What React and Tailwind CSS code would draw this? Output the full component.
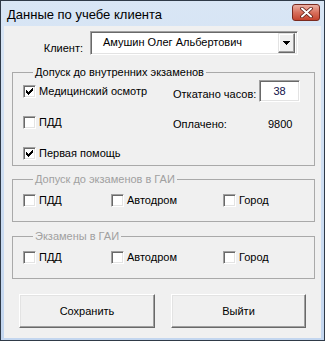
import React from 'react'

const FONT = { fontFamily: '"Liberation Sans", Arial, sans-serif' }

function Check({ checked, label }) {
  return (
    <div className="flex items-center gap-[3px] h-[20px]">
      <span className="w-[13px] h-[13px] shrink-0 bg-white border border-t-[#a0a0a0] border-l-[#a0a0a0] border-r-white border-b-white shadow-[inset_1px_1px_0_#696969,inset_-1px_-1px_0_#e3e3e3] flex items-center justify-center">
        {checked && (
          <svg width="7" height="7" viewBox="0 0 7 7" shapeRendering="crispEdges">
            <polygon points="0,2 2,4 7,-1 7,2 2,7 0,5" fill="#000" />
          </svg>
        )}
      </span>
      <span className="leading-[13px]">{label}</span>
    </div>
  )
}

function Group({ title, muted, children, className = '' }) {
  return (
    <fieldset className={`ml-[8px] w-[303px] border border-[#a9a9a9] pl-[10px] ${className}`}>
      <legend className={`ml-[10px] px-[2px] leading-[13px] ${muted ? 'text-[#a0a0a0]' : 'text-black'}`}>
        {title}
      </legend>
      {children}
    </fieldset>
  )
}

function Row3({ items }) {
  return (
    <div className="grid grid-cols-[88px_112px_1fr] mt-[4px] pb-[11px]">
      {items.map(t => <Check key={t} label={t} />)}
    </div>
  )
}

function Btn({ children, w }) {
  return (
    <button className={`${w} h-[34px] bg-[#f0f0f0] border border-t-white border-l-white border-r-[#696969] border-b-[#696969] shadow-[inset_-1px_-1px_0_#a0a0a0,inset_1px_1px_0_#e3e3e3] leading-[13px]`}>
      {children}
    </button>
  )
}

export default function App() {
  return (
    <div className="w-[325px] h-[341px] flex flex-col border border-[#2f3a48] bg-gradient-to-b from-[#d9e6f5] to-[#c3d6ef] text-[11px] text-black" style={FONT}>
      {/* Title bar */}
      <div className="h-[25px] flex items-center justify-between pl-[6px] pr-[4px]">
        <span className="text-[13px] leading-[15px] mt-[1px]">Данные по учебе клиента</span>
        <div className="w-[28px] h-[17px] rounded-[3px] border border-[#7a2a1f] bg-gradient-to-b from-[#eab0a4] via-[#d8705d] to-[#c4432d] flex items-center justify-center mb-[2px]">
          <svg width="13" height="11" viewBox="0 0 13 11">
            <path d="M2 1.5 L11 9.5 M11 1.5 L2 9.5" stroke="#5a1a12" strokeWidth="3.6" strokeLinecap="round" />
            <path d="M2 1.5 L11 9.5 M11 1.5 L2 9.5" stroke="#fff" strokeWidth="2" strokeLinecap="round" />
          </svg>
        </div>
      </div>

      {/* Body */}
      <div className="flex-1 mx-[3px] mb-[2px] bg-[#f0f0f0] pt-[5px]">
        <div className="flex items-start">
          <span className="w-[86px] text-right pr-[7px] mt-[11px] leading-[13px]">Клиент:</span>
          <div className="w-[208px] h-[24px] bg-white border border-t-[#a0a0a0] border-l-[#a0a0a0] border-r-white border-b-white shadow-[inset_1px_1px_0_#696969,inset_-1px_-1px_0_#e3e3e3] flex items-center pl-[12px] pr-[2px]">
            <span className="flex-1 leading-[13px] -mt-[1px]">Амушин Олег Альбертович</span>
            <div className="w-[17px] h-[20px] bg-[#f0f0f0] border border-t-[#e3e3e3] border-l-[#e3e3e3] border-r-[#696969] border-b-[#696969] shadow-[inset_-1px_-1px_0_#a0a0a0,inset_1px_1px_0_#fff] flex items-center justify-center">
              <svg width="7" height="4" viewBox="0 0 7 4" shapeRendering="crispEdges">
                <polygon points="0,0 7,0 3.5,4" fill="#000" />
              </svg>
            </div>
          </div>
        </div>

        <Group title="Допуск до внутренних экзаменов" className="mt-[11px] pb-[2px]">
          <div className="flex">
            <div className="w-[150px] flex flex-col gap-[11px] pt-[2px]">
              <Check checked label="Медицинский осмотр" />
              <Check label="ПДД" />
              <Check checked label="Первая помощь" />
            </div>
            <div className="flex flex-col pt-[1px]">
              <div className="flex items-start">
                <span className="w-[86px] pt-[8px] leading-[13px]">Откатано часов:</span>
                <div className="w-[41px] h-[22px] bg-white border border-t-[#a0a0a0] border-l-[#a0a0a0] border-r-white border-b-white shadow-[inset_1px_1px_0_#696969,inset_-1px_-1px_0_#e3e3e3] text-center pt-[4px] leading-[13px] text-[#10104a]">
                  38
                </div>
              </div>
              <div className="flex mt-[16px] leading-[13px]">
                <span className="w-[95px]">Оплачено:</span>
                <span>9800</span>
              </div>
            </div>
          </div>
        </Group>

        <Group title="Допуск до экзаменов в ГАИ" muted className="mt-[7px]">
          <Row3 items={['ПДД', 'Автодром', 'Город']} />
        </Group>

        <Group title="Экзамены в ГАИ" muted className="mt-[8px]">
          <Row3 items={['ПДД', 'Автодром', 'Город']} />
        </Group>

        <div className="flex gap-[16px] ml-[15px] mt-[15px]">
          <Btn w="w-[136px]">Сохранить</Btn>
          <Btn w="w-[135px]">Выйти</Btn>
        </div>
      </div>
    </div>
  )
}
